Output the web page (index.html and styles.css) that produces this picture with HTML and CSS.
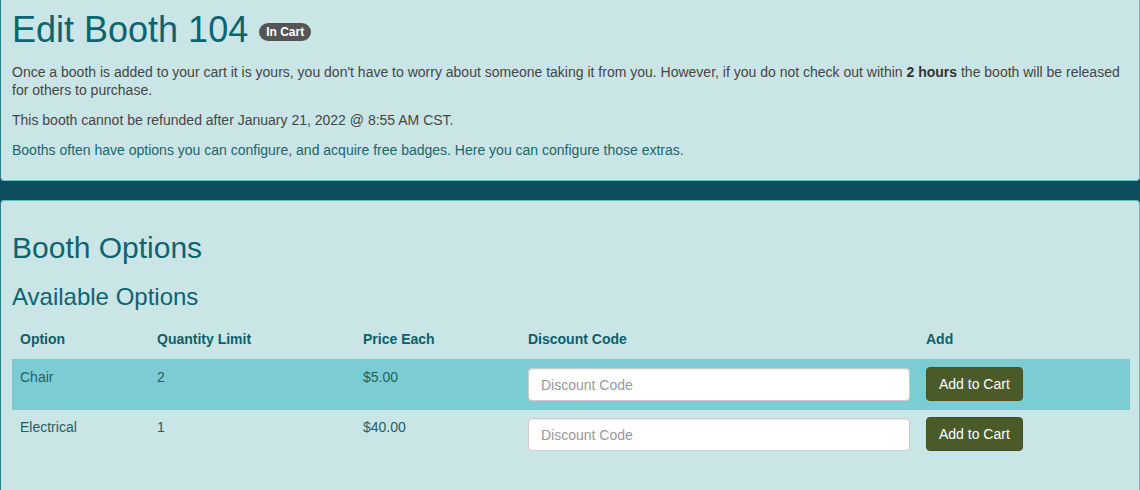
FILE: index.html
```html
<!DOCTYPE html>
<html>
<head>
<meta charset="utf-8">
<link rel="stylesheet" href="styles.css">
</head>
<body>
<div class="page">
  <section class="panel panel-top">
    <h1 class="title">Edit Booth 104 <span class="badge">In Cart</span></h1>
    <p class="muted">Once a booth is added to your cart it is yours, you don't have to worry about someone taking it from you. However, if you do not check out within <strong>2 hours</strong> the booth will be released for others to purchase.</p>
    <p class="muted">This booth cannot be refunded after January 21, 2022 @ 8:55 AM CST.</p>
    <p class="teal">Booths often have options you can configure, and acquire free badges. Here you can configure those extras.</p>
  </section>
  <section class="panel panel-bottom">
    <h2 class="h2">Booth Options</h2>
    <h3 class="h3">Available Options</h3>
    <table class="options">
      <colgroup>
        <col class="c1"><col class="c2"><col class="c3"><col class="c4"><col class="c5">
      </colgroup>
      <thead>
        <tr><th>Option</th><th>Quantity Limit</th><th>Price Each</th><th>Discount Code</th><th>Add</th></tr>
      </thead>
      <tbody>
        <tr class="striped">
          <td>Chair</td><td>2</td><td>$5.00</td>
          <td><input class="field" type="text" placeholder="Discount Code"></td>
          <td><button class="btn">Add to Cart</button></td>
        </tr>
        <tr>
          <td>Electrical</td><td>1</td><td>$40.00</td>
          <td><input class="field" type="text" placeholder="Discount Code"></td>
          <td><button class="btn">Add to Cart</button></td>
        </tr>
      </tbody>
    </table>
  </section>
</div>
</body>
</html>
```
FILE: styles.css
```css
html, body {
  margin: 0;
  padding: 0;
  background: #0e4d5d;
  font-family: "Liberation Sans", Arial, sans-serif;
  font-size: 14px;
  line-height: 1.42857;
  color: #444;
  overflow: hidden;
}
.page {
  display: flex;
  flex-direction: column;
  gap: 19px;
}
.panel {
  background: #cae5e6;
  border: 1px solid #62bcc3;
  border-left-color: #2e7f8a;
  border-radius: 4px;
  padding: 0 11px;
}
.panel-top {
  border-top: 0;
  border-radius: 0 0 4px 4px;
  padding-top: 10px;
  padding-bottom: 9px;
}
.panel-bottom {
  padding-top: 20px;
  padding-bottom: 40px;
}
.title {
  margin: 0 0 13px;
  font-size: 36px;
  font-weight: normal;
  line-height: 1.1;
  color: #0c6470;
  display: flex;
  align-items: center;
  gap: 11px;
}
.badge {
  display: inline-block;
  background: #555;
  color: #fff;
  font-size: 12px;
  font-weight: bold;
  line-height: 1;
  padding: 3px 7px;
  border-radius: 10px;
  margin-top: 5px;
}
p {
  margin: 0 0 11.5px;
  line-height: 18.5px;
}
.muted { color: #454545; }
.muted strong { color: #333; }
.teal { color: #1a6670; }
.h2 {
  margin: 10px 0 10px;
  font-size: 30px;
  font-weight: normal;
  line-height: 1.1;
  color: #0c6470;
}
.h3 {
  margin: 20px 0 12px;
  font-size: 24px;
  font-weight: normal;
  line-height: 1.1;
  color: #0c6470;
}
.options {
  width: 1118px;
  border-collapse: collapse;
  color: #245f5e;
}
.c1 { width: 137px; }
.c2 { width: 206px; }
.c3 { width: 165px; }
.c4 { width: 398px; }
.c5 { width: 212px; }
.options th {
  text-align: left;
  font-weight: bold;
  color: #0e5f6a;
  padding: 8px;
  border-bottom: 2px solid transparent;
}
.options td {
  padding: 8px;
  vertical-align: top;
}
.options tr + tr td { border-top: 1px solid transparent; }
.options tr.striped td { background: #7ccdd3; }
.field {
  display: block;
  box-sizing: border-box;
  width: 382px;
  height: 33px;
  padding: 6px 12px;
  font-family: inherit;
  font-size: 14px;
  color: #555;
  background: #fff;
  border: 1px solid #ccc;
  border-radius: 4px;
  box-shadow: inset 0 1px 1px rgba(0,0,0,0.075);
}
.field::placeholder { color: #999; }
.btn {
  display: block;
  box-sizing: border-box;
  height: 34px;
  padding: 6px 12px;
  font-family: inherit;
  font-size: 14px;
  color: #fff;
  background: #4a5a28;
  border: 1px solid #44531f;
  border-radius: 4px;
  margin: -1px 0 -1px;
}
```
